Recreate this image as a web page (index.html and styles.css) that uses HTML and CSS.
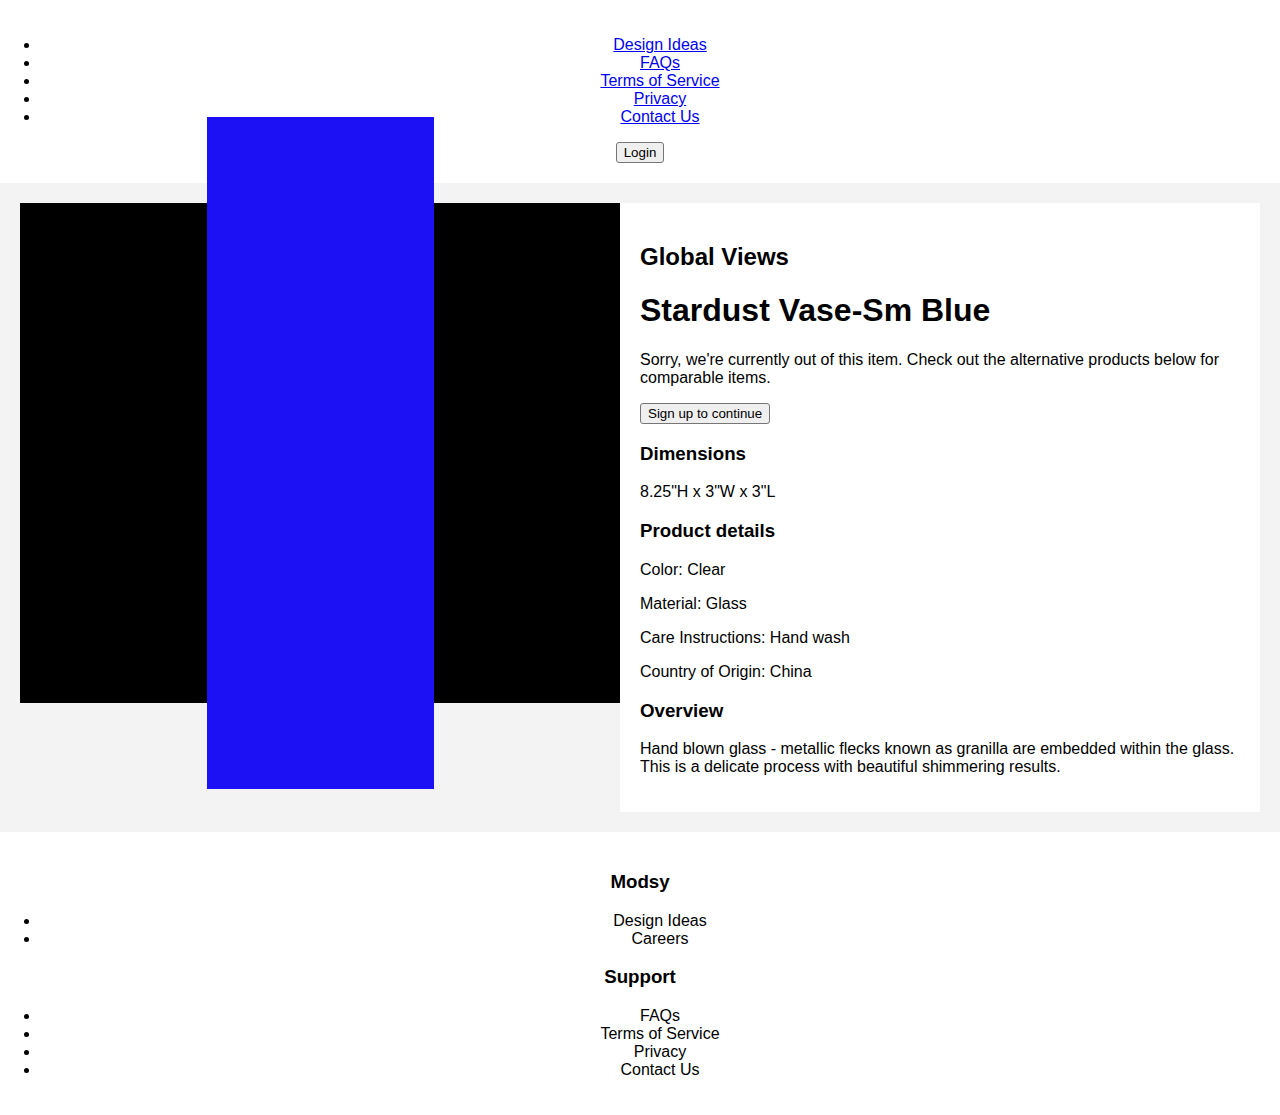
FILE: index.html
```html
<!DOCTYPE html>
<html lang="en">
<head>
<meta charset="utf-8">
<title>Stardust Vase-Sm Blue</title>
<link rel="stylesheet" href="styles.css">
</head>
<body>
<header class="site-header">
  <nav>
    <ul class="nav-list">
      <li><a href="#">Design Ideas</a></li>
      <li><a href="#">FAQs</a></li>
      <li><a href="#">Terms of Service</a></li>
      <li><a href="#">Privacy</a></li>
      <li><a href="#">Contact Us</a></li>
    </ul>
  </nav>
  <div class="auth"><button class="btn">Login</button></div>
</header>
<main class="product">
  <div class="media">
    <div class="vase"></div>
  </div>
  <section class="info">
    <h2 class="brand">Global Views</h2>
    <h1 class="title">Stardust Vase-Sm Blue</h1>
    <p>Sorry, we're currently out of this item. Check out the alternative products below for comparable items.</p>
    <button class="btn">Sign up to continue</button>
    <h3>Dimensions</h3>
    <p>8.25"H x 3"W x 3"L</p>
    <h3>Product details</h3>
    <p>Color: Clear</p>
    <p>Material: Glass</p>
    <p>Care Instructions: Hand wash</p>
    <p>Country of Origin: China</p>
    <h3>Overview</h3>
    <p>Hand blown glass - metallic flecks known as granilla are embedded within the glass. This is a delicate process with beautiful shimmering results.</p>
  </section>
</main>
<footer class="site-footer">
  <h3>Modsy</h3>
  <ul class="foot-list">
    <li>Design Ideas</li>
    <li>Careers</li>
  </ul>
  <h3>Support</h3>
  <ul class="foot-list">
    <li>FAQs</li>
    <li>Terms of Service</li>
    <li>Privacy</li>
    <li>Contact Us</li>
  </ul>
</footer>
</body>
</html>
```
FILE: styles.css
```css
html, body {
  margin: 0;
  padding: 0;
}
body {
  font-family: "Liberation Sans", Arial, sans-serif;
  font-size: 16px;
  line-height: 1.125;
  color: #000;
  background: #fff;
}
.site-header {
  padding: 20px 0;
  text-align: center;
}
.nav-list {
  margin: 16px 0;
  padding-left: 40px;
}
.nav-list a {
  color: #0000ee;
  text-decoration: underline;
}
.auth {
  text-align: center;
}
.btn {
  font-family: "Liberation Sans", Arial, sans-serif;
  font-size: 13.333px;
  line-height: 15px;
  color: #000;
  background: #efefef;
  border: 1px solid #767676;
  border-radius: 3px;
  padding: 2px 7px;
  margin: 0;
  vertical-align: top;
}
.product {
  display: flex;
  align-items: flex-start;
  padding: 20px;
  background: #f3f3f3;
}
.media {
  position: relative;
  flex: none;
  width: 600px;
  height: 500px;
  background: #000;
}
.vase {
  position: absolute;
  left: 187px;
  top: -86px;
  width: 227px;
  height: 672px;
  background: #1c10f5;
}
.info {
  flex: 1;
  background: #fff;
  padding: 20px;
}
.info h2 {
  font-size: 24px;
  margin: 20px 0;
  line-height: 28px;
}
.info h1 {
  font-size: 32px;
  margin: 21px 0 22px;
  line-height: 37px;
}
.info h3 {
  font-size: 18.72px;
  line-height: 22px;
  margin: 18.72px 0;
}
.info p {
  margin: 16px 0;
}
.site-footer {
  padding: 20px 0;
  text-align: center;
}
.site-footer h3 {
  font-size: 18.72px;
  line-height: 22px;
  margin: 18.72px 0;
}
.foot-list {
  margin: 16px 0;
  padding-left: 40px;
}
```
